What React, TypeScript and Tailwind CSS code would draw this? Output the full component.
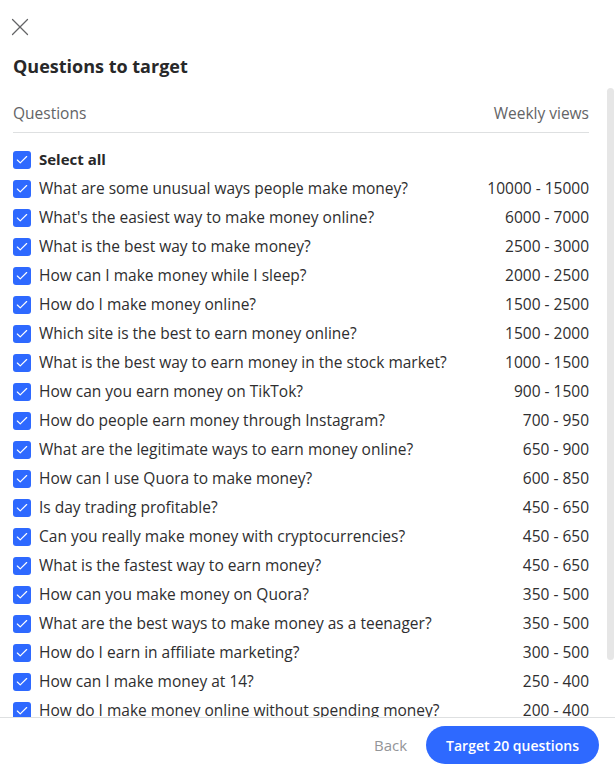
import { Check, X } from "lucide-react";

const questions: [string, string][] = [
  ["What are some unusual ways people make money?", "10000 - 15000"],
  ["What's the easiest way to make money online?", "6000 - 7000"],
  ["What is the best way to make money?", "2500 - 3000"],
  ["How can I make money while I sleep?", "2000 - 2500"],
  ["How do I make money online?", "1500 - 2500"],
  ["Which site is the best to earn money online?", "1500 - 2000"],
  ["What is the best way to earn money in the stock market?", "1000 - 1500"],
  ["How can you earn money on TikTok?", "900 - 1500"],
  ["How do people earn money through Instagram?", "700 - 950"],
  ["What are the legitimate ways to earn money online?", "650 - 900"],
  ["How can I use Quora to make money?", "600 - 850"],
  ["Is day trading profitable?", "450 - 650"],
  ["Can you really make money with cryptocurrencies?", "450 - 650"],
  ["What is the fastest way to earn money?", "450 - 650"],
  ["How can you make money on Quora?", "350 - 500"],
  ["What are the best ways to make money as a teenager?", "350 - 500"],
  ["How do I earn in affiliate marketing?", "300 - 500"],
  ["How can I make money at 14?", "250 - 400"],
  ["How do I make money online without spending money?", "200 - 400"],
];

function Box() {
  return (
    <span className="flex h-[18px] w-[18px] shrink-0 items-center justify-center rounded-[3px] bg-[#2e69ff]">
      <Check className="h-[14px] w-[14px] text-white" strokeWidth={2} />
    </span>
  );
}

export default function App() {
  return (
    <div
      className="flex h-[772px] w-[615px] flex-col overflow-hidden bg-white text-[#2e2e2f]"
      style={{ fontFamily: '"Open Sans", "Noto Sans", sans-serif' }}
    >
      <div className="h-[42px] px-[5px] pt-[12px]">
        <X className="h-[30px] w-[30px] text-[#636466]" strokeWidth={1} />
      </div>
      <h1 className="mt-[12px] px-[13px] text-[18px] font-bold leading-[24px] text-[#282829]">Questions to target</h1>

      <div className="mt-[8px] flex min-h-0 flex-1">
        <div className="flex min-w-0 flex-1 flex-col overflow-hidden pl-[13px] pr-[14px]">
          <div className="flex h-[47px] shrink-0 items-end justify-between border-b border-[#dee0e1] pb-[7px] text-[15.5px] text-[#636466]">
            <span>Questions</span>
            <span>Weekly views</span>
          </div>
          <div className="flex flex-col pt-[12px]">
            <label className="flex h-[29px] items-center gap-[8px] text-[15px] font-bold text-[#282829]">
              <Box />
              <span>Select all</span>
            </label>
            {questions.map(([q, v]) => (
              <label key={q} className="flex h-[29px] shrink-0 items-center gap-[8px] text-[15.5px]">
                <Box />
                <span className="flex-1 truncate">{q}</span>
                <span className="shrink-0 text-right">{v}</span>
              </label>
            ))}
          </div>
        </div>
        <div className="w-[12px] shrink-0 pt-[2px]">
          <div className="ml-[4px] h-[572px] w-[7px] rounded-full bg-[#e6e6e6]" />
        </div>
      </div>

      <div className="flex h-[55px] shrink-0 items-center justify-end gap-[19px] border-t border-[#dee0e1] px-[16px]">
        <button className="text-[15px] text-[#939598]">Back</button>
        <button className="h-[38px] rounded-full bg-[#2e69ff] px-[20px] text-[14px] font-semibold text-white">
          Target 20 questions
        </button>
      </div>
    </div>
  );
}
